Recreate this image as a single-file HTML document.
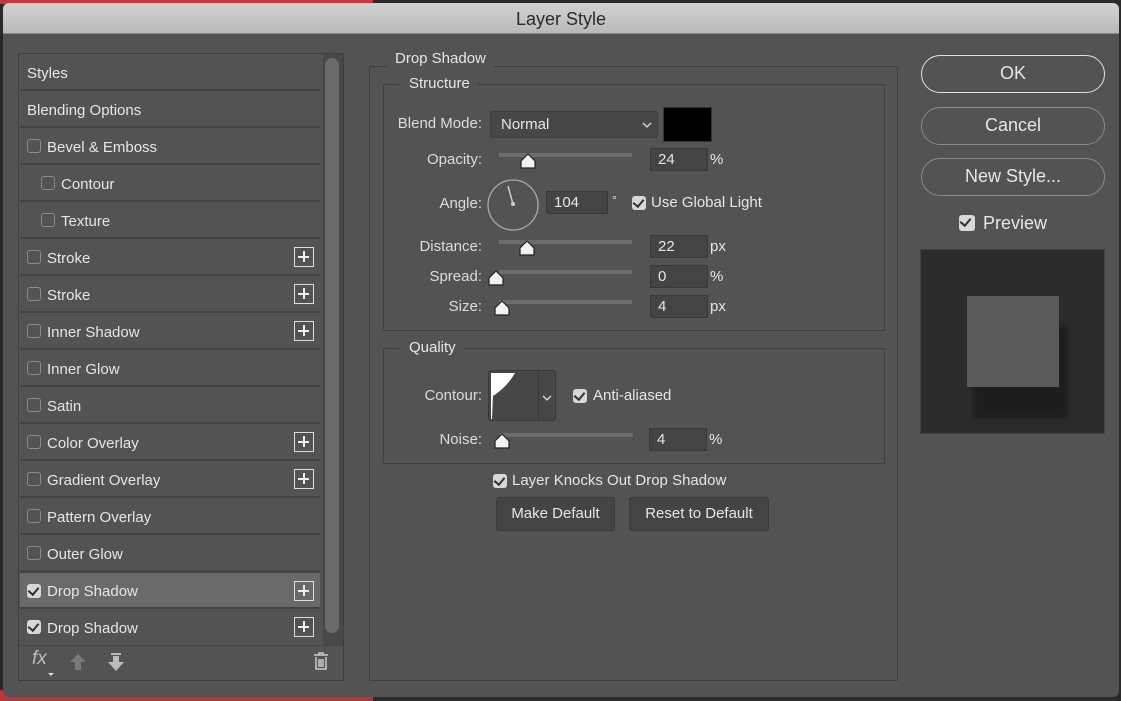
<!DOCTYPE html>
<html><head><meta charset="utf-8"><style>
*{box-sizing:border-box;margin:0;padding:0}
body{width:1121px;height:701px;position:relative;overflow:hidden;background:#2a2a2a;font-family:"Liberation Sans",sans-serif;color:#e6e6e6;font-size:15px}
.a{position:absolute}
#win{left:3px;top:3px;width:1116px;height:694px;background:#535353;border-radius:6px;overflow:hidden}
#title{left:0;top:0;width:1116px;height:31px;background:linear-gradient(#d2d2d2,#b9b9b9);border-bottom:1px solid #8a8a8a;text-align:center;line-height:32px;font-size:18px;color:#2b2b2b}
.row{position:absolute;left:20px;width:300px;height:37px;border-bottom:2px solid #434343;line-height:40px;font-size:15px}
.cb{position:absolute;width:14px;height:14px;border:1.5px solid #8a8a8a;border-radius:3px}
.cbk{position:absolute;width:14px;height:14px;background:#d8d8d8;border-radius:3px}
.cbk:after{content:"";position:absolute;left:3px;top:1px;width:5px;height:8px;border:solid #333;border-width:0 2.5px 2.5px 0;transform:rotate(40deg)}
.plus{position:absolute;left:274px;top:8px;width:20px;height:20px;border:1.5px solid #ddd}
.plus:before{content:"";position:absolute;left:3px;top:7.5px;width:11px;height:2px;background:#eee}
.plus:after{content:"";position:absolute;left:7.5px;top:3px;width:2px;height:11px;background:#eee}
.grp{position:absolute;border:1px solid #3e3e3e;border-radius:2px}
.lg{position:absolute;background:#535353;padding:0 8px;font-size:15px;line-height:18px}
.lbl{position:absolute;text-align:right;width:120px;font-size:15px;color:#dcdcdc}
.inp{position:absolute;background:#444;border:1px solid #393939;height:23px;line-height:21px;padding-left:7px;font-size:15px}
.trk{position:absolute;height:4px;background:#6c6c6c;width:133px;left:499px}
.th{position:absolute;width:18px;height:16px}
.btn{position:absolute;border:1.5px solid #8a8a8a;border-radius:19px;height:38px;width:184px;text-align:center;line-height:35px;font-size:18px}
.sb{position:absolute;background:#444;border:1px solid #3a3a3a;border-radius:3px;height:34px;line-height:32px;text-align:center;font-size:15px}
</style></head><body>
<div class="a" style="left:0;top:0;width:373px;height:4px;background:#c8383b"></div>
<div class="a" style="left:0;top:690px;width:373px;height:11px;background:#b8373a"></div>
<div id="win" class="a">
<div id="title" class="a">Layer Style</div>
<div class="a" style="left:15px;top:50px;width:326px;height:628px;border:1px solid #3e3e3e;background:#535353"></div>
<div class="a" style="left:16px;top:51px;width:304px;height:592px;background:#535353"></div>
<div class="a" style="left:320px;top:51px;width:20px;height:592px;background:#484848"></div>
<div class="a" style="left:322px;top:55px;width:14px;height:575px;background:#6a6a6a;border-radius:7px"></div>
<div class="row" style="top:51px;left:17px"><span class="a" style="left:7px">Styles</span></div>
<div class="row" style="top:88px;left:17px"><span class="a" style="left:7px">Blending Options</span></div>
<div class="row" style="top:125px;left:17px"><span class="cb" style="left:7px;top:11px"></span><span class="a" style="left:27px">Bevel &amp; Emboss</span></div>
<div class="row" style="top:162px;left:17px"><span class="cb" style="left:21px;top:11px"></span><span class="a" style="left:41px">Contour</span></div>
<div class="row" style="top:199px;left:17px"><span class="cb" style="left:21px;top:11px"></span><span class="a" style="left:41px">Texture</span></div>
<div class="row" style="top:236px;left:17px"><span class="cb" style="left:7px;top:11px"></span><span class="a" style="left:27px">Stroke</span><span class="plus"></span></div>
<div class="row" style="top:273px;left:17px"><span class="cb" style="left:7px;top:11px"></span><span class="a" style="left:27px">Stroke</span><span class="plus"></span></div>
<div class="row" style="top:310px;left:17px"><span class="cb" style="left:7px;top:11px"></span><span class="a" style="left:27px">Inner Shadow</span><span class="plus"></span></div>
<div class="row" style="top:347px;left:17px"><span class="cb" style="left:7px;top:11px"></span><span class="a" style="left:27px">Inner Glow</span></div>
<div class="row" style="top:384px;left:17px"><span class="cb" style="left:7px;top:11px"></span><span class="a" style="left:27px">Satin</span></div>
<div class="row" style="top:421px;left:17px"><span class="cb" style="left:7px;top:11px"></span><span class="a" style="left:27px">Color Overlay</span><span class="plus"></span></div>
<div class="row" style="top:458px;left:17px"><span class="cb" style="left:7px;top:11px"></span><span class="a" style="left:27px">Gradient Overlay</span><span class="plus"></span></div>
<div class="row" style="top:495px;left:17px"><span class="cb" style="left:7px;top:11px"></span><span class="a" style="left:27px">Pattern Overlay</span></div>
<div class="row" style="top:532px;left:17px"><span class="cb" style="left:7px;top:11px"></span><span class="a" style="left:27px">Outer Glow</span></div>
<div class="row" style="top:569px;left:17px;background:#6a6a6a;border-top:1px solid #444"><span class="cbk" style="left:7px;top:11px"></span><span class="a" style="left:27px;top:-1px">Drop Shadow</span><span class="plus"></span></div>
<div class="row" style="top:606px;left:17px;border-bottom:1px solid #4a4a4a"><span class="cbk" style="left:7px;top:11px"></span><span class="a" style="left:27px">Drop Shadow</span><span class="plus"></span></div>
<div class="a" style="left:29px;top:645px;font-style:italic;font-size:19px;color:#bbb">fx</div>
<div class="a" style="left:45px;top:670px;width:0;height:0;border:3px solid transparent;border-top:3px solid #ddd"></div>
<svg class="a" style="left:66px;top:650px" width="18" height="18"><path d="M9 1 L17 9 L12 9 L12 17 L6 17 L6 9 L1 9 Z" fill="#7a7a7a"/></svg>
<svg class="a" style="left:104px;top:649px" width="18" height="20"><rect x="4" y="1" width="10" height="2" fill="#bbb"/><path d="M6 4 L12 4 L12 10 L17 10 L9 19 L1 10 L6 10 Z" fill="#bbb"/></svg>
<svg class="a" style="left:310px;top:649px" width="16" height="19"><path d="M1 3 H15 M6 3 V1 H10 V3 M3 5 V17 H13 V5 M6 7 V15 M8 7 V15 M10 7 V15" stroke="#ccc" stroke-width="1.5" fill="none"/></svg>
<div class="grp" style="left:366px;top:63px;width:529px;height:615px"></div>
<div class="lg" style="left:384px;top:47px">Drop Shadow</div>
<div class="grp" style="left:380px;top:81px;width:502px;height:247px"></div>
<div class="lg" style="left:398px;top:72px">Structure</div>
<div class="lbl" style="left:359px;top:112px">Blend Mode:</div>
<div class="a" style="left:487px;top:108px;width:168px;height:27px;background:#474747;border:1px solid #3c3c3c;border-radius:3px;padding-left:10px;line-height:25px">Normal</div>
<svg class="a" style="left:638px;top:117px" width="12" height="10"><path d="M2 3 L6 7 L10 3" stroke="#ddd" stroke-width="1.3" fill="none"/></svg>
<div class="a" style="left:660px;top:104px;width:49px;height:35px;background:#000;border:1px solid #333"></div>
<div class="lbl" style="left:359px;top:148px">Opacity:</div>
<div class="trk" style="top:150px;left:496px"></div>
<svg class="th" style="left:516px;top:150px" viewBox="0 0 18 16"><path d="M9 1 L16 8 V15 H2 V8 Z" fill="#f2f2f2" stroke="#222" stroke-width="1.2" stroke-linejoin="round"/></svg>
<div class="inp" style="left:647px;top:145px;width:58px">24</div>
<div class="a" style="left:707px;top:148px">%</div>
<div class="lbl" style="left:359px;top:192px">Angle:</div>
<svg class="a" style="left:483px;top:175px" width="54" height="54"><circle cx="27" cy="27" r="25" fill="none" stroke="#aaa" stroke-width="1.3"/><path d="M27 26 L22 8" stroke="#ccc" stroke-width="1.5"/><circle cx="27" cy="26" r="2" fill="#ccc"/></svg>
<div class="inp" style="left:543px;top:188px;width:62px">104</div>
<div class="a" style="left:609px;top:190px;font-size:12px">°</div>
<span class="cbk" style="left:629px;top:193px"></span>
<div class="a" style="left:648px;top:191px">Use Global Light</div>
<div class="lbl" style="left:359px;top:235px">Distance:</div>
<div class="trk" style="top:237px;left:496px"></div>
<svg class="th" style="left:515px;top:237px" viewBox="0 0 18 16"><path d="M9 1 L16 8 V15 H2 V8 Z" fill="#f2f2f2" stroke="#222" stroke-width="1.2" stroke-linejoin="round"/></svg>
<div class="inp" style="left:647px;top:232px;width:58px">22</div>
<div class="a" style="left:707px;top:235px">px</div>
<div class="lbl" style="left:359px;top:265px">Spread:</div>
<div class="trk" style="top:267px;left:496px"></div>
<svg class="th" style="left:484px;top:267px" viewBox="0 0 18 16"><path d="M9 1 L16 8 V15 H2 V8 Z" fill="#f2f2f2" stroke="#222" stroke-width="1.2" stroke-linejoin="round"/></svg>
<div class="inp" style="left:647px;top:262px;width:58px">0</div>
<div class="a" style="left:707px;top:265px">%</div>
<div class="lbl" style="left:359px;top:295px">Size:</div>
<div class="trk" style="top:297px;left:496px"></div>
<svg class="th" style="left:490px;top:297px" viewBox="0 0 18 16"><path d="M9 1 L16 8 V15 H2 V8 Z" fill="#f2f2f2" stroke="#222" stroke-width="1.2" stroke-linejoin="round"/></svg>
<div class="inp" style="left:647px;top:292px;width:58px">4</div>
<div class="a" style="left:707px;top:295px">px</div>
<div class="grp" style="left:380px;top:345px;width:502px;height:116px"></div>
<div class="lg" style="left:398px;top:336px">Quality</div>
<div class="lbl" style="left:359px;top:384px">Contour:</div>
<div class="a" style="left:485px;top:367px;width:68px;height:51px;border:1px solid #3a3a3a;border-radius:3px;background:#474747"></div>
<div class="a" style="left:535px;top:368px;width:1px;height:49px;background:#3a3a3a"></div>
<svg class="a" style="left:488px;top:370px" width="46" height="46"><path d="M0 0 H24 Q16 14 2 23 L1 46 H0 Z" fill="#fff"/></svg>
<svg class="a" style="left:538px;top:390px" width="12" height="10"><path d="M2 3 L6 7 L10 3" stroke="#ddd" stroke-width="1.3" fill="none"/></svg>
<span class="cbk" style="left:570px;top:386px"></span>
<div class="a" style="left:590px;top:384px">Anti-aliased</div>
<div class="lbl" style="left:359px;top:428px">Noise:</div>
<div class="trk" style="top:430px;left:497px;width:133px"></div>
<svg class="th" style="left:490px;top:430px" viewBox="0 0 18 16"><path d="M9 1 L16 8 V15 H2 V8 Z" fill="#f2f2f2" stroke="#222" stroke-width="1.2" stroke-linejoin="round"/></svg>
<div class="inp" style="left:646px;top:425px;width:58px">4</div>
<div class="a" style="left:706px;top:428px">%</div>
<span class="cbk" style="left:490px;top:471px"></span>
<div class="a" style="left:509px;top:469px">Layer Knocks Out Drop Shadow</div>
<div class="sb" style="left:493px;top:494px;width:119px">Make Default</div>
<div class="sb" style="left:626px;top:494px;width:140px">Reset to Default</div>
<div class="btn" style="left:918px;top:52px;border-color:#e0e0e0">OK</div>
<div class="btn" style="left:918px;top:104px">Cancel</div>
<div class="btn" style="left:918px;top:155px">New Style...</div>
<span class="cbk" style="left:956px;top:212px;width:16px;height:16px"></span>
<div class="a" style="left:980px;top:210px;font-size:18px">Preview</div>
<div class="a" style="left:917px;top:246px;width:185px;height:185px;background:#2c2c2c;border:1px solid #444"></div>
<div class="a" style="left:970px;top:323px;width:95px;height:92px;background:#1d1d1d;filter:blur(3px)"></div>
<div class="a" style="left:964px;top:293px;width:92px;height:91px;background:#5a5a5a"></div>
</div>
</body></html>
